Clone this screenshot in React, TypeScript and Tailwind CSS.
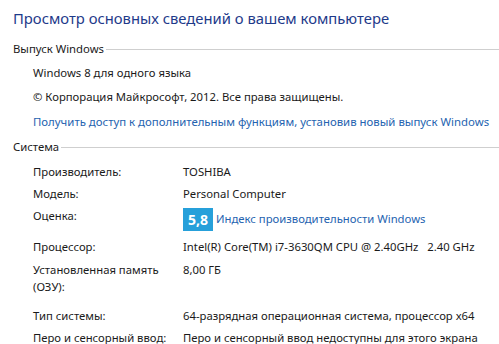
import React from "react";

const font = { fontFamily: '"Segoe UI", "Noto Sans", "Open Sans", sans-serif' };

function Header({ text, h }: { text: string; h: string }) {
  return (
    <div className={`flex items-center pl-[13px] ${h}`}>
      <span className="text-[11.3px] leading-[20px] text-[#1a1a1a] pr-[2px]">{text}</span>
      <div className="flex-1 h-px bg-[#cfcfcf]" />
    </div>
  );
}

function Row({ label, children, h }: { label: React.ReactNode; children?: React.ReactNode; h: string }) {
  return (
    <div className={`flex pl-[33px] items-center ${h}`}>
      <div className="w-[150px] text-[11.3px] leading-[22px] text-[#1a1a1a]">{label}</div>
      <div className="flex-1 text-[11.3px] leading-[22px] text-[#1a1a1a] whitespace-nowrap">{children}</div>
    </div>
  );
}

export default function App() {
  return (
    <div className="w-[499px] h-[344px] bg-white overflow-hidden" style={font}>
      <div className="h-[37px] pt-[8px] pl-[13px] text-[14.8px] leading-[20px] text-[#1e3a8a]">
        Просмотр основных сведений о вашем компьютере
      </div>
      <Header text="Выпуск Windows" h="h-[24px]" />
      <div className="h-[24px] flex items-center pl-[33px] text-[11.3px] text-[#1a1a1a]">Windows 8 для одного языка</div>
      <div className="h-[25px] flex items-center pl-[33px] text-[11.3px] text-[#1a1a1a]">© Корпорация Майкрософт, 2012. Все права защищены.</div>
      <div className="h-[24px] flex items-center pl-[33px] text-[11.4px] text-[#2563b0] whitespace-nowrap">Получить доступ к дополнительным функциям, установив новый выпуск Windows</div>
      <Header text="Система" h="h-[26px]" />
      <Row label="Производитель:" h="h-[23px]">TOSHIBA</Row>
      <Row label="Модель:" h="h-[22px]">Personal Computer</Row>
      <div className="flex pl-[33px] h-[28px] items-start">
        <div className="w-[150px] text-[11.3px] leading-[22px] text-[#1a1a1a]">Оценка:</div>
        <div className="flex items-center mt-[3px]">
          <div className="w-[30px] h-[23px] bg-[#26a0da] text-white font-bold text-[14px] leading-[23px] text-center">5,8</div>
          <span className="ml-[3px] text-[11.3px] text-[#2563b0]">Индекс производительности Windows</span>
        </div>
      </div>
      <Row label="Процессор:" h="h-[28px]">Intel(R) Core(TM) i7-3630QM CPU @ 2.40GHz&nbsp;&nbsp; 2.40 GHz</Row>
      <div className="flex pl-[33px] h-[44px] items-start">
        <div className="w-[150px] text-[11.3px] leading-[17px] text-[#1a1a1a]">Установленная память<br />(ОЗУ):</div>
        <div className="text-[11.3px] leading-[17px] text-[#1a1a1a]">8,00 ГБ</div>
      </div>
      <Row label="Тип системы:" h="h-[22px]">64-разрядная операционная система, процессор x64</Row>
      <Row label="Перо и сенсорный ввод:" h="h-[22px]">Перо и сенсорный ввод недоступны для этого экрана</Row>
    </div>
  );
}
